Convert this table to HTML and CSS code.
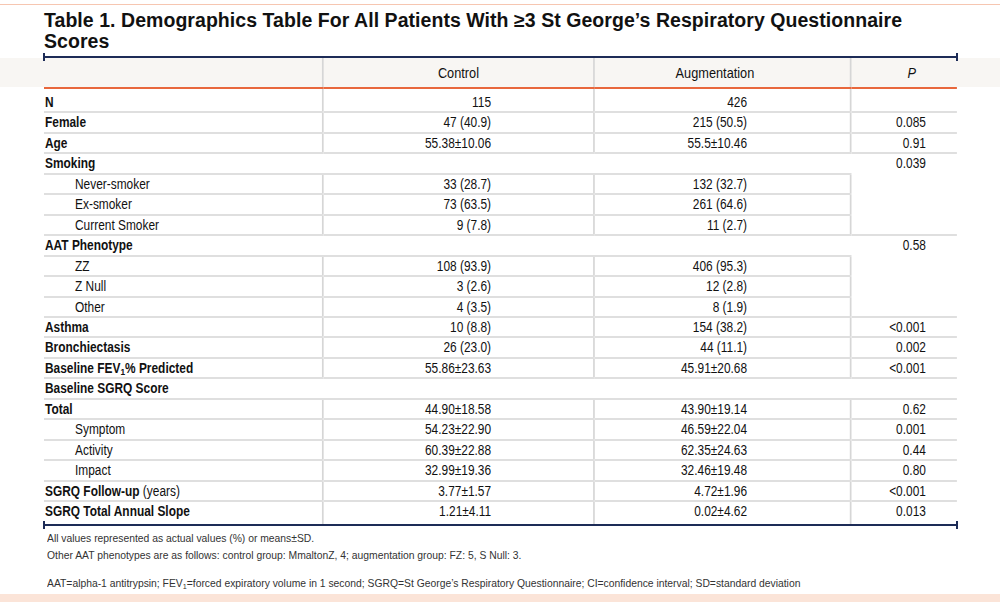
FILE: index.html
```html
<!DOCTYPE html>
<html lang="en">
<head>
<meta charset="utf-8">
<title>Table 1. Demographics</title>
<link rel="stylesheet" href="styles.css">
</head>
<body>
<div class="page">
  <h1 class="title">Table 1. Demographics Table For All Patients With ≥3 St George’s Respiratory Questionnaire Scores</h1>
  <div class="rule"></div>
  <div class="band">
    <table class="demo">
      <colgroup>
        <col class="col-label">
        <col class="col-ctrl">
        <col class="col-aug">
        <col class="col-p">
      </colgroup>
      <thead>
        <tr>
          <th></th>
          <th class="v">Control</th>
          <th class="v h-aug">Augmentation</th>
          <th class="v h-p"><i>P</i></th>
        </tr>
      </thead>
      <tbody>
        <tr class="first">
          <td class="lab">N</td><td class="v n1">115</td><td class="v n2">426</td><td class="v np"></td>
        </tr>
        <tr>
          <td class="lab">Female</td><td class="v n1">47 (40.9)</td><td class="v n2">215 (50.5)</td><td class="v np">0.085</td>
        </tr>
        <tr>
          <td class="lab">Age</td><td class="v n1">55.38±10.06</td><td class="v n2">55.5±10.46</td><td class="v np">0.91</td>
        </tr>
        <tr>
          <td class="lab" colspan="3">Smoking</td><td class="np open">0.039</td>
        </tr>
        <tr>
          <td class="lab sub">Never-smoker</td><td class="v n1">33 (28.7)</td><td class="v n2">132 (32.7)</td><td class="v np open"></td>
        </tr>
        <tr>
          <td class="lab sub">Ex-smoker</td><td class="v n1">73 (63.5)</td><td class="v n2">261 (64.6)</td><td class="v np open"></td>
        </tr>
        <tr>
          <td class="lab sub">Current Smoker</td><td class="v n1">9 (7.8)</td><td class="v n2">11 (2.7)</td><td class="v np"></td>
        </tr>
        <tr>
          <td class="lab" colspan="3">AAT Phenotype</td><td class="np open">0.58</td>
        </tr>
        <tr>
          <td class="lab sub">ZZ</td><td class="v n1">108 (93.9)</td><td class="v n2">406 (95.3)</td><td class="v np open"></td>
        </tr>
        <tr>
          <td class="lab sub">Z Null</td><td class="v n1">3 (2.6)</td><td class="v n2">12 (2.8)</td><td class="v np open"></td>
        </tr>
        <tr>
          <td class="lab sub">Other</td><td class="v n1">4 (3.5)</td><td class="v n2">8 (1.9)</td><td class="v np"></td>
        </tr>
        <tr>
          <td class="lab">Asthma</td><td class="v n1">10 (8.8)</td><td class="v n2">154 (38.2)</td><td class="v np">&lt;0.001</td>
        </tr>
        <tr>
          <td class="lab">Bronchiectasis</td><td class="v n1">26 (23.0)</td><td class="v n2">44 (11.1)</td><td class="v np">0.002</td>
        </tr>
        <tr>
          <td class="lab">Baseline FEV<sub>1</sub>% Predicted</td><td class="v n1">55.86±23.63</td><td class="v n2">45.91±20.68</td><td class="v np">&lt;0.001</td>
        </tr>
        <tr>
          <td class="lab" colspan="4">Baseline SGRQ Score</td>
        </tr>
        <tr>
          <td class="lab">Total</td><td class="v n1">44.90±18.58</td><td class="v n2">43.90±19.14</td><td class="v np">0.62</td>
        </tr>
        <tr>
          <td class="lab sub">Symptom</td><td class="v n1">54.23±22.90</td><td class="v n2">46.59±22.04</td><td class="v np">0.001</td>
        </tr>
        <tr>
          <td class="lab sub">Activity</td><td class="v n1">60.39±22.88</td><td class="v n2">62.35±24.63</td><td class="v np">0.44</td>
        </tr>
        <tr>
          <td class="lab sub">Impact</td><td class="v n1">32.99±19.36</td><td class="v n2">32.46±19.48</td><td class="v np">0.80</td>
        </tr>
        <tr>
          <td class="lab">SGRQ Follow-up <span class="reg">(years)</span></td><td class="v n1">3.77±1.57</td><td class="v n2">4.72±1.96</td><td class="v np">&lt;0.001</td>
        </tr>
        <tr class="last">
          <td class="lab">SGRQ Total Annual Slope</td><td class="v n1">1.21±4.11</td><td class="v n2">0.02±4.62</td><td class="v np">0.013</td>
        </tr>
      </tbody>
    </table>
  </div>
  <div class="rule"></div>
  <div class="notes">
    <p>All values represented as actual values (%) or means±SD.</p>
    <p>Other AAT phenotypes are as follows: control group: MmaltonZ, 4; augmentation group: FZ: 5, S Null: 3.</p>
    <p class="abbr">AAT=alpha-1 antitrypsin; FEV<sub>1</sub>=forced expiratory volume in 1 second; SGRQ=St George’s Respiratory Questionnaire; CI=confidence interval; SD=standard deviation</p>
  </div>
  <div class="foot-band"></div>
</div>
</body>
</html>
```

FILE: styles.css
```css
html, body {
  margin: 0;
  padding: 0;
  background: #ffffff;
  overflow: hidden;
}

body {
  padding-top: 4px;
  font-family: "Liberation Sans", Arial, sans-serif;
  color: #111111;
}

.page {
  width: 1000px;
  height: 597px;
  border-top: 1px solid #f6c6b1;
  display: flex;
  flex-direction: column;
}

.title {
  width: 900px;
  margin: 5px 0 4px 44px;
  font-weight: 700;
  font-size: 19.5px;
  line-height: 21px;
  letter-spacing: 0.05px;
  color: #111111;
}

.rule {
  position: relative;
  margin: 0 42px 0 43px;
  height: 0;
  border-top: 2px solid #1d2c57;
}

.rule::before,
.rule::after {
  content: "";
  position: absolute;
  top: -5px;
  width: 2px;
  height: 8px;
  background: #1d2c57;
}

.rule::before { left: 0; }
.rule::after { right: 0; }

.band {
  padding: 0 43px 0 44px;
  background: linear-gradient(#f8f6f3, #f8f6f3) 0 0 / 100% 29px no-repeat;
}

/* The table is set in a condensed face: Liberation Sans squeezed horizontally */
.demo {
  width: 1074px;
  border-collapse: collapse;
  table-layout: fixed;
  font-size: 14px;
  transform: scaleX(0.85);
  transform-origin: 0 0;
}

.col-label { width: 328.2px; }
.col-ctrl { width: 318.8px; }
.col-aug { width: 302.35px; }
.col-p { width: 124.65px; }

.demo th {
  height: 29px;
  padding: 0;
  font-weight: 400;
  font-size: 15px;
  text-align: center;
  border-bottom: 2px solid #e8673c;
}

.demo th.h-aug { padding-right: 17.6px; }
.demo th.h-p { padding-left: 17.6px; }

.demo td {
  padding: 0;
  line-height: 18.45px;
  white-space: nowrap;
  border-bottom: 2px solid #dfdfdf;
}

.demo .v {
  border-left: 2px solid #d6d6d6;
}

.demo .lab {
  font-weight: 700;
  padding-left: 1.2px;
}

.demo .lab.sub {
  font-weight: 400;
  padding-left: 36.5px;
}

.demo .lab sub,
.notes sub {
  font-size: 70%;
  line-height: 0;
  vertical-align: -2px;
}

.demo .reg { font-weight: 400; }

.demo .n1 {
  text-align: right;
  padding-right: 120px;
}

.demo .n2 {
  text-align: right;
  padding-right: 121.2px;
}

.demo .np {
  text-align: right;
  padding-right: 36.5px;
  vertical-align: top;
}

.demo .np.open {
  border-bottom: 0;
}

.demo tr.first td { padding-top: 4px; }
.demo tr.last td {
  padding-bottom: 3px;
  border-bottom: 0;
}

.notes {
  padding: 4px 0 0 47px;
  font-size: 11px;
  line-height: 17px;
  color: #333333;
  flex: 1;
}

.notes p {
  margin: 0;
  white-space: nowrap;
  transform: scaleX(0.94);
  transform-origin: 0 0;
}

.notes .abbr {
  margin-top: 11px;
}

.foot-band {
  height: 8px;
  background: #fbe4d8;
}
```
